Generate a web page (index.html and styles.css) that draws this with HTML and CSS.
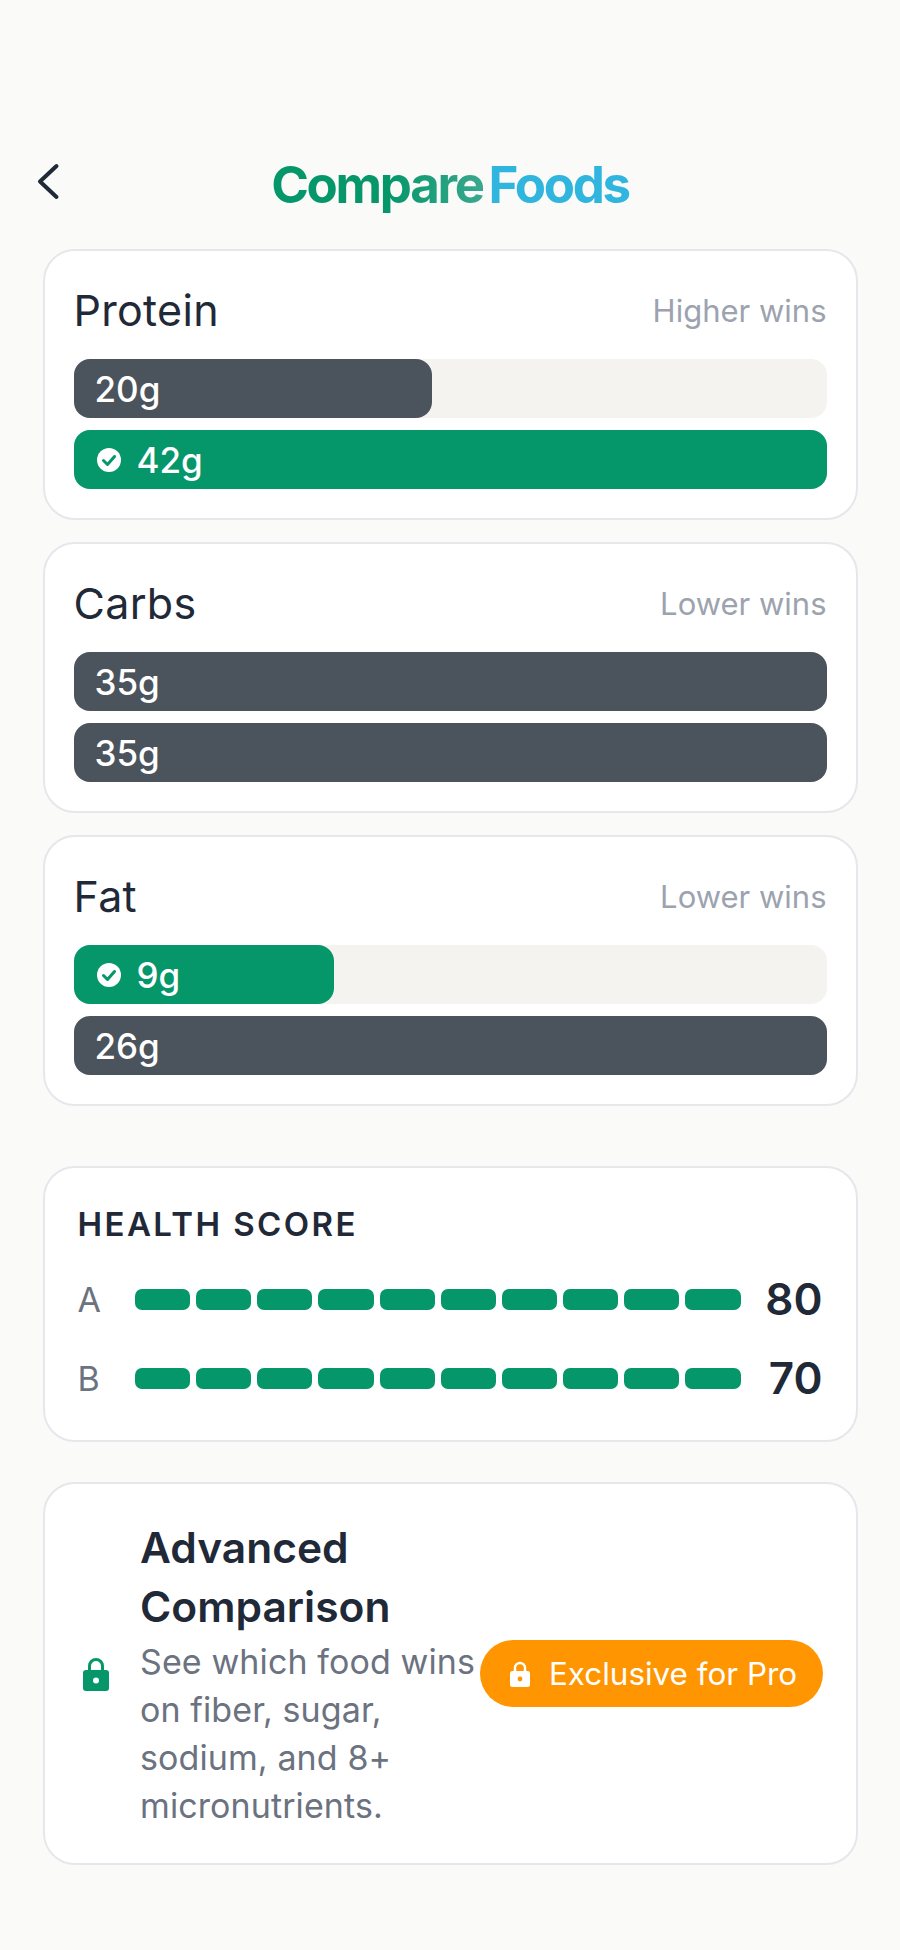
FILE: index.html
```html
<!DOCTYPE html>
<html lang="en">
<head>
  <meta charset="UTF-8">
  <title>Compare Foods</title>
  <link rel="stylesheet" href="styles.css">
</head>
<body>

  <header class="header">
    <svg class="back" viewBox="0 0 24 37" width="24" height="37" fill="none" stroke="#1f2937" stroke-width="4" stroke-linecap="round" stroke-linejoin="round"><path d="M20.5 3 L4 18.5 L20.5 34"/></svg>
    <h1 class="title"><span class="title-a">Compare</span> <span class="title-b">Foods</span></h1>
  </header>

  <!-- Macro cards -->
  <section class="macros">
    <div class="card macro">
      <div class="macro-head"><span class="macro-name">Protein</span><span class="macro-rule">Higher wins</span></div>
      <div class="track"><div class="bar" style="width: 47.6%">20g</div></div>
      <div class="track"><div class="bar win" style="width: 100%">
        <svg class="check" viewBox="0 0 24 24" width="24" height="24"><circle cx="12" cy="12" r="12" fill="#fff"/><path d="M6.5 12.5 L10.5 16.5 L17.5 8.5" fill="none" stroke="#059669" stroke-width="3" stroke-linecap="round" stroke-linejoin="round"/></svg>
        42g</div></div>
    </div>

    <div class="card macro">
      <div class="macro-head"><span class="macro-name">Carbs</span><span class="macro-rule">Lower wins</span></div>
      <div class="track"><div class="bar" style="width: 100%">35g</div></div>
      <div class="track"><div class="bar" style="width: 100%">35g</div></div>
    </div>

    <div class="card macro">
      <div class="macro-head"><span class="macro-name">Fat</span><span class="macro-rule">Lower wins</span></div>
      <div class="track"><div class="bar win" style="width: 34.6%">
        <svg class="check" viewBox="0 0 24 24" width="24" height="24"><circle cx="12" cy="12" r="12" fill="#fff"/><path d="M6.5 12.5 L10.5 16.5 L17.5 8.5" fill="none" stroke="#059669" stroke-width="3" stroke-linecap="round" stroke-linejoin="round"/></svg>
        9g</div></div>
      <div class="track"><div class="bar" style="width: 100%">26g</div></div>
    </div>
  </section>

  <!-- Health score -->
  <section class="card health">
    <h2 class="health-title">HEALTH SCORE</h2>
    <div class="score-row">
      <span class="score-label">A</span>
      <div class="segments"><i></i><i></i><i></i><i></i><i></i><i></i><i></i><i></i><i></i><i></i></div>
      <span class="score-value">80</span>
    </div>
    <div class="score-row">
      <span class="score-label">B</span>
      <div class="segments"><i></i><i></i><i></i><i></i><i></i><i></i><i></i><i></i><i></i><i></i></div>
      <span class="score-value">70</span>
    </div>
  </section>

  <!-- Pro upsell -->
  <section class="card pro">
    <svg class="lock" viewBox="0 0 26 34" width="26" height="34"><path d="M6.5 14 V9 a6.5 6.5 0 0 1 13 0 V14" fill="none" stroke="#059669" stroke-width="3"/><rect x="0" y="13" width="26" height="21" rx="3" fill="#059669"/><circle cx="13" cy="23.5" r="3" fill="#fff"/></svg>
    <div class="pro-text">
      <h2 class="pro-title">Advanced Comparison</h2>
      <p class="pro-desc">See which food wins on fiber, sugar, sodium, and 8+ micronutrients.</p>
    </div>
    <div class="badge">
      <svg class="badge-lock" viewBox="0 0 20 26" width="20" height="26"><path d="M5 11 V7 a5 5 0 0 1 10 0 V11" fill="none" stroke="#fff" stroke-width="2.4"/><rect x="0" y="10" width="20" height="16" rx="2.5" fill="#fff"/><circle cx="10" cy="18" r="2.4" fill="#ff9500"/></svg>
      Exclusive for Pro
    </div>
  </section>

</body>
</html>
```

FILE: styles.css
```css
* {
  box-sizing: border-box;
}
body {
  margin: 0;
  padding: 136px 42.5px 0;
  background: #fafaf8;
  font-family: Inter, sans-serif;
  color: #1f2937;
}
h1, h2, p {
  margin: 0;
}
.header {
  display: flex;
  align-items: center;
  justify-content: center;
  height: 98px;
  margin-bottom: 15px;
  position: relative;
}
.back {
  position: absolute;
  left: -6.5px;
  top: 27px;
}
.title {
  font-size: 51px;
  font-weight: 700;
  letter-spacing: -2.3px;
  word-spacing: -4px;
  line-height: 56px;
}
.title-a {
  background: linear-gradient(90deg, #059669 55%, #3aa88f 100%);
  -webkit-background-clip: text;
  background-clip: text;
  color: transparent;
}
.title-b {
  color: #2fb5de;
}
.macros {
  display: flex;
  flex-direction: column;
  gap: 22px;
}
.card {
  background: #fff;
  border: 2px solid #e5e7eb;
  border-radius: 32px;
}
.macro {
  height: 271px;
  padding: 31px 29px 0;
}
.macro-head {
  display: flex;
  align-items: center;
  justify-content: space-between;
  height: 56px;
  margin-bottom: 21px;
}
.macro-name {
  font-size: 43px;
  letter-spacing: 0.3px;
}
.macro-rule {
  font-size: 31px;
  color: #9ca3af;
}
.track {
  height: 59px;
  background: #f5f3ef;
  border-radius: 16px;
  margin-bottom: 12px;
}
.bar {
  display: flex;
  align-items: center;
  gap: 16px;
  height: 100%;
  padding-left: 21px;
  background: #4b535c;
  border-radius: 16px;
  color: #fff;
  font-size: 35px;
  font-weight: 500;
}
.bar.win {
  background: #059669;
  padding-left: 23px;
}
.health {
  height: 276px;
  margin-top: 60px;
  padding: 36px 33px 0;
}
.health-title {
  font-size: 33px;
  font-weight: 600;
  letter-spacing: 2.4px;
  line-height: 40px;
  margin-bottom: 25px;
}
.score-row {
  display: flex;
  align-items: center;
  height: 60px;
  margin-bottom: 19px;
}
.score-label {
  width: 57.5px;
  font-size: 34px;
  color: #6b7280;
}
.segments {
  display: flex;
  gap: 6px;
  flex: 1;
}
.segments i {
  flex: 1;
  height: 21px;
  background: #059669;
  border-radius: 7px;
}
.score-value {
  width: 82px;
  text-align: right;
  font-size: 44px;
  font-weight: 600;
}
.pro {
  display: flex;
  align-items: center;
  height: 383px;
  margin-top: 40px;
  padding: 0 33px 0 38.5px;
}
.lock {
  flex-shrink: 0;
}
.pro-text {
  width: 340px;
  margin-left: 31px;
  flex-shrink: 0;
}
.pro-title {
  font-size: 42.5px;
  font-weight: 600;
  line-height: 59px;
  margin-bottom: 2px;
}
.pro-desc {
  font-size: 34px;
  letter-spacing: 0.1px;
  line-height: 48px;
  color: #6b7280;
}
.badge {
  display: flex;
  align-items: center;
  gap: 19px;
  height: 67px;
  padding: 0 26px 0 30px;
  background: #ff9500;
  border-radius: 34px;
  color: #fff;
  font-size: 31.4px;
  white-space: nowrap;
  margin-left: auto;
}
```
